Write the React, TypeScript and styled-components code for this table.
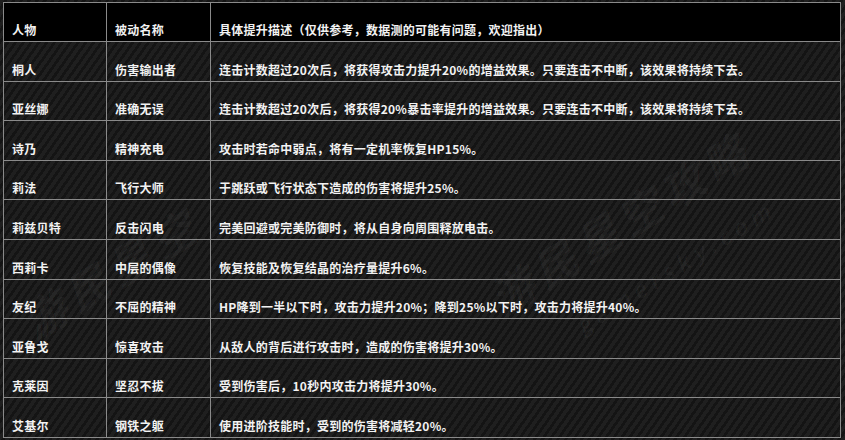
import React from 'react';
import styled, { createGlobalStyle } from 'styled-components';

const GlobalStyle = createGlobalStyle`
  html, body {
    margin: 0;
    padding: 0;
    background-color: #1b1b1b;
  }
  body {
    font-family: "Noto Sans CJK SC", "Noto Sans", sans-serif;
  }
`;

const stripes = `
  background-color: #1e1e1e;
  background-image: repeating-linear-gradient(
    125deg,
    #1f1f1f 0px,
    #1f1f1f 3.6px,
    #141414 3.6px,
    #141414 6.4px
  );
`;

const Page = styled.div`
  position: relative;
  width: 845px;
  height: 440px;
  padding: 2px 0 0 3px;
  box-sizing: border-box;
  overflow: hidden;
  ${stripes};
`;

const Table = styled.table`
  border-collapse: collapse;
  width: 838px;
  table-layout: fixed;
  border: 1px solid #8e8e8e;
`;

const HeadRow = styled.tr`
  height: 39px;
  background: #000;
`;

const Row = styled.tr`
  height: 39.6px;
`;

const Cell = styled.td`
  border: 1px solid #8a8a8a;
  padding: 0 6px 3px 8px;
  vertical-align: bottom;
  color: #f2f2f2;
  font-size: 12px;
  line-height: 17px;
  font-weight: 700;
  letter-spacing: 0.25px;
  white-space: nowrap;
  overflow: hidden;
`;

const Watermark = styled.div<{ $size: number }>`
  position: absolute;
  pointer-events: none;
  color: rgba(255, 255, 255, 0.035);
  font-size: ${(p) => p.$size}px;
  font-weight: 700;
  font-style: italic;
  white-space: nowrap;
  transform: rotate(-32deg);
  letter-spacing: 6px;
`;

const rows: [string, string, string][] = [
  ['桐人', '伤害输出者', '连击计数超过20次后，将获得攻击力提升20%的增益效果。只要连击不中断，该效果将持续下去。'],
  ['亚丝娜', '准确无误', '连击计数超过20次后，将获得20%暴击率提升的增益效果。只要连击不中断，该效果将持续下去。'],
  ['诗乃', '精神充电', '攻击时若命中弱点，将有一定机率恢复HP15%。'],
  ['莉法', '飞行大师', '于跳跃或飞行状态下造成的伤害将提升25%。'],
  ['莉兹贝特', '反击闪电', '完美回避或完美防御时，将从自身向周围释放电击。'],
  ['西莉卡', '中层的偶像', '恢复技能及恢复结晶的治疗量提升6%。'],
  ['友纪', '不屈的精神', 'HP降到一半以下时，攻击力提升20%；降到25%以下时，攻击力将提升40%。'],
  ['亚鲁戈', '惊喜攻击', '从敌人的背后进行攻击时，造成的伤害将提升30%。'],
  ['克莱因', '坚忍不拔', '受到伤害后，10秒内攻击力将提升30%。'],
  ['艾基尔', '钢铁之躯', '使用进阶技能时，受到的伤害将减轻20%。'],
];

export default function App() {
  return (
    <>
      <GlobalStyle />
      <Page>
        <Table>
          <colgroup>
            <col style={{ width: 103 }} />
            <col style={{ width: 104 }} />
            <col />
          </colgroup>
          <tbody>
            <HeadRow>
              <Cell>人物</Cell>
              <Cell>被动名称</Cell>
              <Cell>具体提升描述（仅供参考，数据测的可能有问题，欢迎指出）</Cell>
            </HeadRow>
            {rows.map(([name, skill, desc]) => (
              <Row key={name}>
                <Cell>{name}</Cell>
                <Cell>{skill}</Cell>
                <Cell>{desc}</Cell>
              </Row>
            ))}
          </tbody>
        </Table>
        <Watermark $size={44} style={{ left: 10, top: 240 }}>游民星空</Watermark>
        <Watermark $size={44} style={{ left: 470, top: 190 }}>游民星空攻略</Watermark>
        <Watermark $size={22} style={{ left: 560, top: 250 }}>gamersky.com</Watermark>
      </Page>
    </>
  );
}
